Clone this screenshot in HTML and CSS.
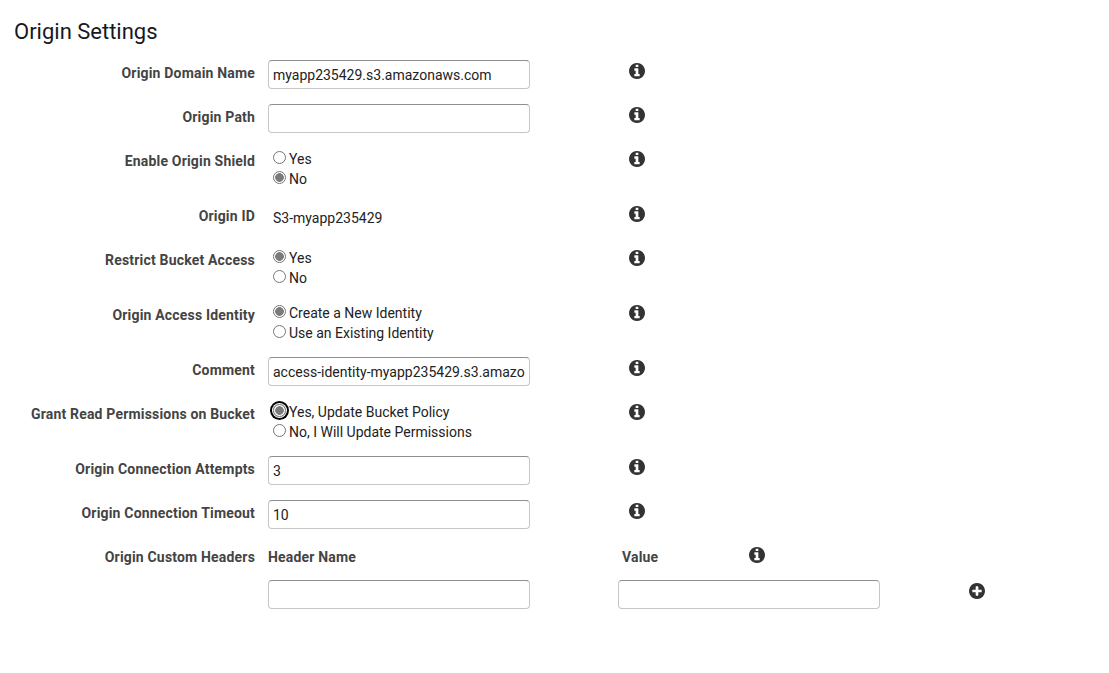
FILE: index.html
```html
<!DOCTYPE html>
<html lang="en">
<head>
  <meta charset="UTF-8" />
  <title>Origin Settings</title>
  <link rel="stylesheet" href="styles.css">
</head>
<body>

  <svg class="defs" width="0" height="0" aria-hidden="true">
    <symbol id="icon-info" viewBox="0 128 1536 1536">
      <path fill-rule="evenodd" d="M1024 1376v-160q0-14-9-23t-23-9h-96v-512q0-14-9-23t-23-9h-320q-14 0-23 9t-9 23v160q0 14 9 23t23 9h96v320h-96q-14 0-23 9t-9 23v160q0 14 9 23t23 9h448q14 0 23-9t9-23zm-128-896v-160q0-14-9-23t-23-9h-192q-14 0-23 9t-9 23v160q0 14 9 23t23 9h192q14 0 23-9t9-23zm640 416q0 209-103 385.5t-279.5 279.5-385.5 103-385.5-103-279.5-279.5-103-385.5 103-385.5 279.5-279.5 385.5-103 385.5 103 279.5 279.5 103 385.5z"/>
    </symbol>
    <symbol id="icon-plus" viewBox="0 128 1536 1536">
      <path fill-rule="evenodd" d="M1216 960v-128q0-26-19-45t-45-19h-256v-256q0-26-19-45t-45-19h-128q-26 0-45 19t-19 45v256h-256q-26 0-45 19t-19 45v128q0 26 19 45t45 19h256v256q0 26 19 45t45 19h128q26 0 45-19t19-45v-256h256q26 0 45-19t19-45zm320-64q0 209-103 385.5t-279.5 279.5-385.5 103-385.5-103-279.5-279.5-103-385.5 103-385.5 279.5-279.5 385.5-103 385.5 103 279.5 279.5 103 385.5z"/>
    </symbol>
  </svg>

  <h2 class="title">Origin Settings</h2>

  <form class="settings">
    <div class="row">
      <label class="label">Origin Domain Name</label>
      <div class="control"><input class="text" type="text" value="myapp235429.s3.amazonaws.com"></div>
      <svg class="icon info"><use href="#icon-info"/></svg>
    </div>

    <div class="row">
      <label class="label">Origin Path</label>
      <div class="control"><input class="text" type="text"></div>
      <svg class="icon info"><use href="#icon-info"/></svg>
    </div>

    <div class="row radios">
      <label class="label">Enable Origin Shield</label>
      <div class="control">
        <label class="radio"><input type="radio" name="shield">Yes</label>
        <label class="radio"><input type="radio" name="shield" checked>No</label>
      </div>
      <svg class="icon info"><use href="#icon-info"/></svg>
    </div>

    <div class="row">
      <label class="label">Origin ID</label>
      <div class="control plain">S3-myapp235429</div>
      <svg class="icon info"><use href="#icon-info"/></svg>
    </div>

    <div class="row radios">
      <label class="label">Restrict Bucket Access</label>
      <div class="control">
        <label class="radio"><input type="radio" name="restrict" checked>Yes</label>
        <label class="radio"><input type="radio" name="restrict">No</label>
      </div>
      <svg class="icon info"><use href="#icon-info"/></svg>
    </div>

    <div class="row radios">
      <label class="label">Origin Access Identity</label>
      <div class="control">
        <label class="radio"><input type="radio" name="identity" checked>Create a New Identity</label>
        <label class="radio"><input type="radio" name="identity">Use an Existing Identity</label>
      </div>
      <svg class="icon info"><use href="#icon-info"/></svg>
    </div>

    <div class="row">
      <label class="label">Comment</label>
      <div class="control"><input class="text" type="text" value="access-identity-myapp235429.s3.amazonaws.com"></div>
      <svg class="icon info"><use href="#icon-info"/></svg>
    </div>

    <div class="row radios">
      <label class="label">Grant Read Permissions on Bucket</label>
      <div class="control">
        <label class="radio"><input class="focused" type="radio" name="grant" checked>Yes, Update Bucket Policy</label>
        <label class="radio"><input type="radio" name="grant">No, I Will Update Permissions</label>
      </div>
      <svg class="icon info"><use href="#icon-info"/></svg>
    </div>

    <div class="row">
      <label class="label">Origin Connection Attempts</label>
      <div class="control"><input class="text" type="text" value="3"></div>
      <svg class="icon info"><use href="#icon-info"/></svg>
    </div>

    <div class="row">
      <label class="label">Origin Connection Timeout</label>
      <div class="control"><input class="text" type="text" value="10"></div>
      <svg class="icon info"><use href="#icon-info"/></svg>
    </div>

    <div class="row headers-head">
      <label class="label">Origin Custom Headers</label>
      <div class="control column-name">Header Name</div>
      <div class="column-value">Value</div>
      <svg class="icon value-info"><use href="#icon-info"/></svg>
    </div>

    <div class="row headers-input">
      <div class="label"></div>
      <div class="control"><input class="text" type="text"></div>
      <div class="value-input"><input class="text" type="text"></div>
      <svg class="icon add"><use href="#icon-plus"/></svg>
    </div>
  </form>

</body>
</html>
```

FILE: styles.css
```css
body {
  margin: 0;
  font-family: Roboto, sans-serif;
  font-size: 14px;
  color: #222;
  background: #fff;
}
.defs {
  position: absolute;
}
.title {
  margin: 0;
  padding: 19px 14px 0;
  height: 41px;
  box-sizing: border-box;
  font-size: 22px;
  line-height: 26px;
  font-weight: 400;
  color: #16191f;
}
.settings {
  margin-top: 19px;
}
.row {
  display: flex;
  align-items: flex-start;
  height: 29px;
  margin-bottom: 15px;
}
.row.radios {
  height: 40px;
}
.label {
  flex: none;
  width: 255px;
  margin-right: 13px;
  padding-top: 5px;
  box-sizing: border-box;
  line-height: 17px;
  text-align: right;
  font-weight: 700;
  letter-spacing: 0.18px;
  color: #444;
}
.control {
  flex: none;
  width: 262px;
}
.text {
  display: block;
  width: 100%;
  height: 29px;
  box-sizing: border-box;
  padding: 0 4px;
  border: 1px solid #c6c6c6;
  border-top-color: #8f8f8f;
  border-radius: 4px;
  font: 14px Roboto, sans-serif;
  color: #222;
  background: #fff;
  outline: none;
}
.plain {
  padding: 7px 0 0 5px;
  box-sizing: border-box;
  line-height: 17px;
}
.radio {
  display: flex;
  align-items: center;
  height: 20px;
  box-sizing: border-box;
  padding: 2px 0 0 5px;
}
.radio input {
  appearance: none;
  box-sizing: border-box;
  width: 13px;
  height: 13px;
  margin: 0 3px 4px 0;
  border: 1px solid #767676;
  border-radius: 50%;
  background: #fff;
}
.radio input:checked {
  background: radial-gradient(circle, #7a7a7a 0 4px, #fff 4.6px);
}
.radio input.focused {
  box-shadow: 0 0 0 1px #fff, 0 0 0 3px #000;
}
.icon {
  flex: none;
  width: 16px;
  height: 16px;
  fill: #333;
}
.info {
  margin: 3px 0 0 99px;
}
.headers-head {
  height: 21px;
}
.column-name,
.column-value {
  padding-top: 5px;
  line-height: 17px;
  font-weight: 700;
  letter-spacing: 0.18px;
  color: #444;
}
.column-value {
  flex: none;
  width: 127px;
  margin-left: 92px;
}
.value-info {
  margin-top: 3px;
}
.headers-input {
  margin-bottom: 0;
}
.value-input {
  flex: none;
  width: 262px;
  margin-left: 88px;
}
.add {
  margin: 3px 0 0 89px;
}
```
